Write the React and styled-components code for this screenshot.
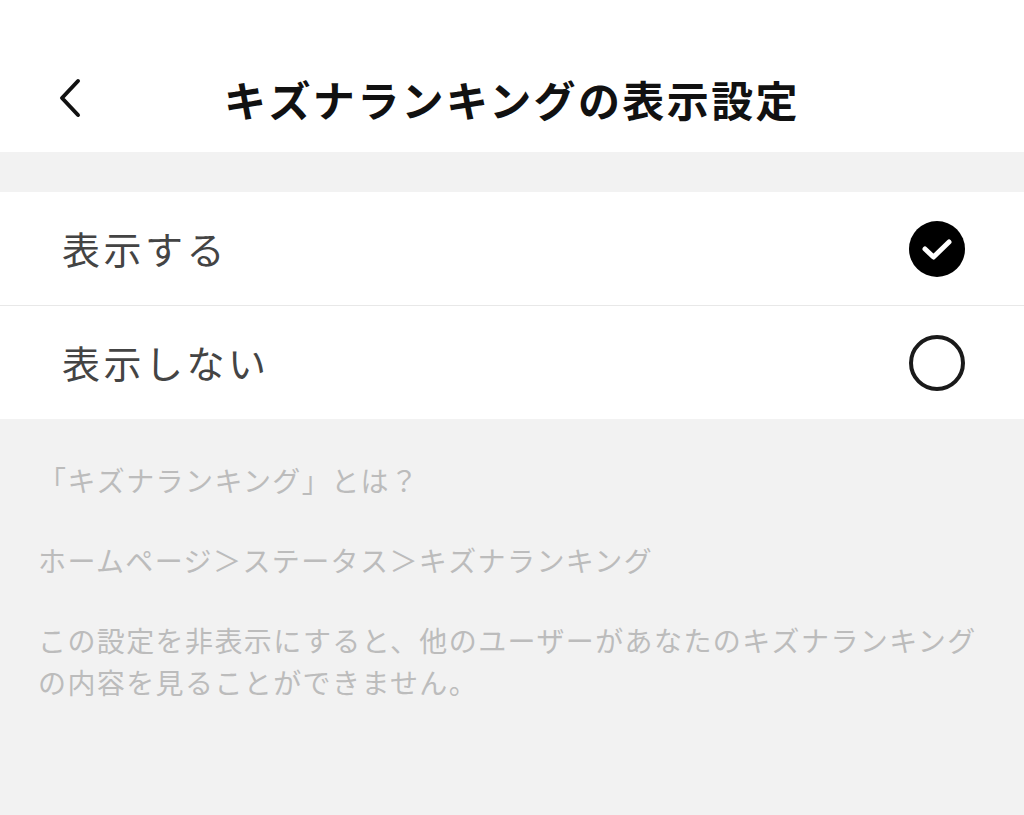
import React, { useState } from 'react';
import styled, { createGlobalStyle } from 'styled-components';

const GlobalStyle = createGlobalStyle`
  html, body {
    margin: 0;
    padding: 0;
    background-color: #f2f2f2;
    font-family: "Noto Sans CJK JP", "Noto Sans", sans-serif;
  }
`;

const Page = styled.div`
  width: 1024px;
  height: 815px;
  background-color: #f2f2f2;
  overflow: hidden;
`;

const Header = styled.div`
  height: 152px;
  background-color: #fff;
  display: flex;
  align-items: center;
  justify-content: center;
  position: relative;
  padding-top: 44px;
  box-sizing: border-box;
`;

const BackButton = styled.button`
  position: absolute;
  left: 50px;
  top: 72px;
  width: 40px;
  height: 52px;
  border: none;
  background: none;
  padding: 0;
  display: flex;
  align-items: center;
  justify-content: center;
`;

const Title = styled.div`
  font-size: 42px;
  font-weight: 700;
  letter-spacing: 2.4px;
  color: #111;
`;

const List = styled.div`
  margin-top: 40px;
  background-color: #fff;
`;

const Row = styled.div`
  height: 113px;
  display: flex;
  align-items: center;
  justify-content: space-between;
  padding: 0 58px 0 62px;
  border-top: ${(p) => (p.divided ? '1px solid #e8e8e8' : 'none')};
  cursor: pointer;
`;

const Label = styled.div`
  font-size: 38px;
  letter-spacing: 3.5px;
  color: #444;
  margin-top: -2px;
`;

const Notes = styled.div`
  padding: 40px 38px 0;
  color: #bcbcbc;
  font-size: 28px;
  letter-spacing: 1.4px;
  line-height: 42px;
  p {
    margin: 0 0 38px;
  }
`;

const Chevron = () => (
  <svg width="30" height="40" viewBox="0 0 30 40">
    <path d="M23 3 L7 20 L23 37" fill="none" stroke="#111" strokeWidth="4" strokeLinecap="round" strokeLinejoin="round" />
  </svg>
);

const Radio = ({ checked }) =>
  checked ? (
    <svg width="58" height="58" viewBox="0 0 58 58">
      <circle cx="29" cy="29" r="28" fill="#000" />
      <path d="M17 29 L25.5 37 L41 22" fill="none" stroke="#fff" strokeWidth="5" strokeLinecap="round" strokeLinejoin="round" />
    </svg>
  ) : (
    <svg width="58" height="58" viewBox="0 0 58 58">
      <circle cx="29" cy="29" r="26" fill="none" stroke="#1a1a1a" strokeWidth="4" />
    </svg>
  );

const options = ['表示する', '表示しない'];

const App = () => {
  const [selected, setSelected] = useState(0);

  return (
    <Page>
      <GlobalStyle />
      <Header>
        <BackButton>
          <Chevron />
        </BackButton>
        <Title>キズナランキングの表示設定</Title>
      </Header>
      <List>
        {options.map((v, i) => (
          <Row key={v} divided={i > 0} onClick={() => setSelected(i)}>
            <Label>{v}</Label>
            <Radio checked={selected === i} />
          </Row>
        ))}
      </List>
      <Notes>
        <p>「キズナランキング」とは？</p>
        <p>ホームページ＞ステータス＞キズナランキング</p>
        <p>この設定を非表示にすると、他のユーザーがあなたのキズナランキングの内容を見ることができません。</p>
      </Notes>
    </Page>
  );
};

export default App;
